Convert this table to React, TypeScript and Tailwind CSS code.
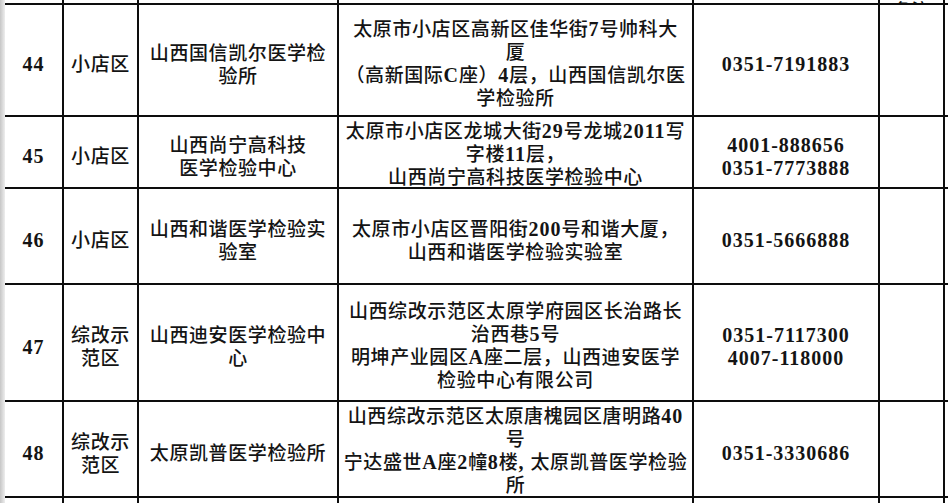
import React from "react";

type Row = {
  no: string;
  area: string[];
  name: string[];
  addr: string[];
  phone: string[];
  addrPad: string;
};

const rows: Row[] = [
  {
    no: "44",
    area: ["小店区"],
    name: ["山西国信凯尔医学检", "验所"],
    addr: ["太原市小店区高新区佳华街7号帅科大", "厦", "（高新国际C座）4层，山西国信凯尔医", "学检验所"],
    phone: ["0351-7191883"],
    addrPad: "pt-[3px]",
  },
  {
    no: "45",
    area: ["小店区"],
    name: ["山西尚宁高科技", "医学检验中心"],
    addr: ["太原市小店区龙城大街29号龙城2011写", "字楼11层，", "山西尚宁高科技医学检验中心"],
    phone: ["4001-888656", "0351-7773888"],
    addrPad: "pt-0",
  },
  {
    no: "46",
    area: ["小店区"],
    name: ["山西和谐医学检验实", "验室"],
    addr: ["太原市小店区晋阳街200号和谐大厦，", "山西和谐医学检验实验室"],
    phone: ["0351-5666888"],
    addrPad: "pt-[5px]",
  },
  {
    no: "47",
    area: ["综改示", "范区"],
    name: ["山西迪安医学检验中", "心"],
    addr: ["山西综改示范区太原学府园区长治路长", "治西巷5号", "明坤产业园区A座二层，山西迪安医学", "检验中心有限公司"],
    phone: ["0351-7117300", "4007-118000"],
    addrPad: "pt-[3px]",
  },
  {
    no: "48",
    area: ["综改示", "范区"],
    name: ["太原凯普医学检验所"],
    addr: ["山西综改示范区太原唐槐园区唐明路40", "号", "宁达盛世A座2幢8楼, 太原凯普医学检验", "所"],
    phone: ["0351-3330686"],
    addrPad: "pt-0",
  },
];

function Rich({ s }: { s: string }) {
  const parts = s.split(/([\x20-\x7e]+)/).filter((p) => p.length > 0);
  return (
    <>
      {parts.map((p, i) =>
        /^[\x20-\x7e]+$/.test(p) ? (
          <span
            key={i}
            className="font-['Liberation_Serif','Noto_Sans_CJK_SC',serif] font-bold text-[20px] leading-none tracking-[1px]"
          >
            {p}
          </span>
        ) : (
          <span key={i}>{p}</span>
        )
      )}
    </>
  );
}

function Cell({ lines }: { lines: string[] }) {
  return (
    <div className="bg-white flex flex-col items-center justify-center text-center pt-[5px] overflow-hidden">
      {lines.map((l, i) => (
        <div key={i} className="whitespace-nowrap leading-[23px]">
          <Rich s={l} />
        </div>
      ))}
    </div>
  );
}

function AddrCell({ lines, pad }: { lines: string[]; pad: string }) {
  return (
    <div className={`bg-white flex flex-col items-center justify-center text-center overflow-hidden ${pad}`}>
      {lines.map((l, i) => (
        <div key={i} className="whitespace-nowrap leading-[23px]">
          <Rich s={l} />
        </div>
      ))}
    </div>
  );
}

function Blank() {
  return <div className="bg-white" />;
}

export default function App() {
  return (
    <div className="w-[948px] h-[503px] overflow-hidden bg-white flex text-[#141414] font-['Noto_Sans_CJK_SC',sans-serif] text-[19px] tracking-[0.6px] font-medium">
      <div className="w-[5px] shrink-0 bg-gradient-to-r from-[#c6c6c6] to-[#eeeeee]" />
      <div className="grid grid-cols-[57px_73px_198px_353px_184px_63px_3px] grid-rows-[3px_110px_70px_94px_115px_94px_5px] gap-[2px] bg-[#0d0d0d] w-[943px] h-[503px] shrink-0">
        {/* partial top row */}
        <Blank />
        <Blank />
        <Blank />
        <Blank />
        <Blank />
        <div className="bg-white overflow-hidden flex items-end justify-center">
          <div className="leading-[17px] h-[17px] mb-[-14px] text-[17px] shrink-0">备注</div>
        </div>
        <Blank />

        {rows.map((r) => (
          <React.Fragment key={r.no}>
            <Cell lines={[r.no]} />
            <Cell lines={r.area} />
            <Cell lines={r.name} />
            <AddrCell lines={r.addr} pad={r.addrPad} />
            <Cell lines={r.phone} />
            <Blank />
            <Blank />
          </React.Fragment>
        ))}

        {/* partial bottom row */}
        <Blank />
        <Blank />
        <Blank />
        <Blank />
        <Blank />
        <Blank />
        <Blank />
      </div>
    </div>
  );
}
